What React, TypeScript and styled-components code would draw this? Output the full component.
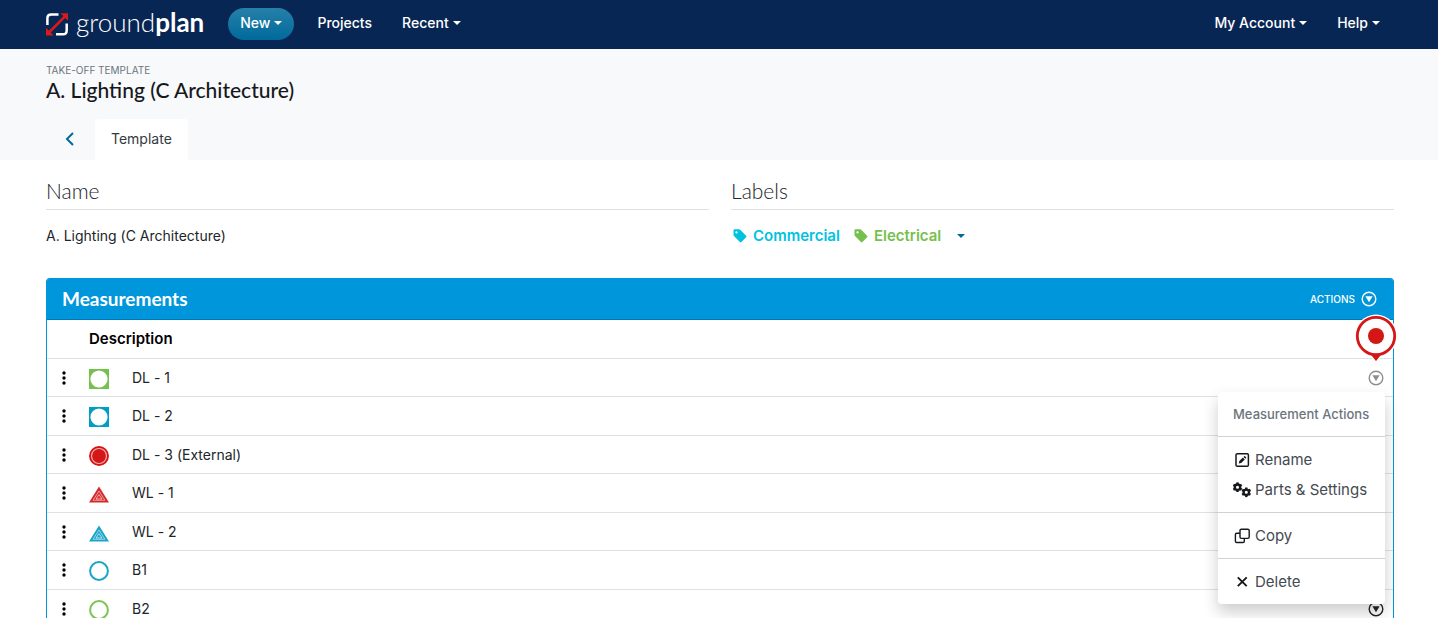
import React from "react";
import styled, { createGlobalStyle, css } from "styled-components";

const body = `Inter, "Liberation Sans", sans-serif`;
const heading = `Lato, "Liberation Sans", sans-serif`;

const GlobalStyle = createGlobalStyle`
  *, *::before, *::after { box-sizing: border-box; }
  body { margin: 0; background: #fff; color: #212529; font: 400 14px/20px ${body}; font-variant-ligatures: none; }
  button { font: inherit; color: inherit; background: none; border: 0; padding: 0; cursor: pointer; }
  a { color: inherit; text-decoration: none; }
  h1, h2, h3, p, ul { margin: 0; padding: 0; font-weight: 400; }
`;

const Page = styled.div`
  height: 100vh;
  margin-right: 2px;
  overflow: hidden;
`;

const Navbar = styled.header`
  display: flex;
  align-items: center;
  height: 49px;
  padding: 0 58px 2px 46px;
  background: #082654;
  color: #fff;
  font-weight: 500;
`;

const Logo = styled.a`
  display: flex;
  align-items: center;
  gap: 7px;
  font: 300 26px/32px ${heading};
  b { font-weight: 700; }
  svg { display: block; margin-top: 2px; }
`;

const LogoText = styled.span`
  padding-bottom: 4px;
`;

const NavLinks = styled.nav`
  display: flex;
  align-items: center;
  gap: 30px;
  margin-left: 24px;
  flex: 1;
`;

const NavItem = styled.button<{ $pill?: boolean }>`
  display: flex;
  align-items: center;
  gap: 4px;
  padding-bottom: 2px;
  ${(p) => p.$pill && css`
    height: 32px;
    padding: 0 12px 2px;
    margin-right: -7px;
    border-radius: 16px;
    background: linear-gradient(#2680a9, #006a9c);
  `}
`;

const Spacer = styled.span`flex: 1;`;

const Caret = styled.span`
  width: 0;
  height: 0;
  border: 4px solid transparent;
  border-top-color: currentColor;
  border-bottom: 0;
`;

const PageHeader = styled.section`
  height: 111px;
  padding: 13px 46px 0;
  background: #f8f9fb;
`;

const Eyebrow = styled.p`
  color: #6c757d;
  font: 400 10px/16px ${body};
  text-transform: uppercase;
`;

const Title = styled.h1`
  color: #16181b;
  font: 500 21px/24px ${heading};
`;

const Tabs = styled.nav`
  display: flex;
  margin-top: 17px;
`;

const Back = styled.button`
  display: grid;
  place-items: center;
  width: 49px;
  height: 40px;
  padding-right: 2px;
  color: #006a9c;
`;

const Tab = styled.a`
  padding: 10px 16px 11px;
  border-radius: 4px 4px 0 0;
  background: #fff;
  color: #343a40;
`;

const Main = styled.main`
  padding: 18px 44px 0 46px;
`;

const Columns = styled.div`
  display: grid;
  grid-template-columns: 1fr 1fr;
  gap: 22px;
`;

const FieldTitle = styled.h2`
  padding-bottom: 6px;
  border-bottom: 1px solid #dee2e6;
  font: 300 21px/25px ${heading};
`;

const FieldBody = styled.div`
  display: flex;
  align-items: center;
  margin-top: 16px;
  height: 20px;
`;

const Label = styled.span<{ $color: string }>`
  display: flex;
  align-items: center;
  gap: 6px;
  margin: 0 12px 0 2px;
  color: ${(p) => p.$color};
  font-size: 15px;
  font-weight: 600;
`;

const LabelMenu = styled.button`
  padding: 8px 4px;
  color: #006a9c;
`;

const Panel = styled.section`
  position: relative;
  margin-top: 32px;
  border: 1px solid #0096dc;
  border-top: 0;
  border-radius: 4px 4px 0 0;
`;

const PanelHead = styled.div`
  display: flex;
  align-items: center;
  justify-content: space-between;
  height: 42px;
  padding: 0 16px 0 15px;
  border-bottom: 1px solid #0079b8;
  border-radius: 3px 3px 0 0;
  background: #0096dc;
  color: #fff;
`;

const PanelTitle = styled.h2`
  font: 700 19px/24px ${heading};
`;

const Actions = styled.button`
  display: flex;
  align-items: center;
  gap: 6px;
  font: 500 10px/16px ${body};
  text-transform: uppercase;
`;

const Table = styled.table`
  width: 100%;
  border-collapse: separate;
  border-spacing: 0;
  table-layout: fixed;
  th, td { padding: 0; border-bottom: 1px solid #dee2e6; text-align: left; }
  thead th { height: 39px; color: #000; font-size: 15px; font-weight: 600; }
  td { height: 38px; }
  tbody tr:nth-child(even) td { height: 39px; }
  svg { display: block; }
`;

const Col = styled.col<{ $w?: number }>`
  width: ${(p) => (p.$w ? p.$w + "px" : "auto")};
`;

const Symbol = styled.span`
  display: block;
  padding-top: 2px;
`;

const RowButton = styled.button<{ $muted?: boolean }>`
  display: block;
  color: ${(p) => (p.$muted ? "#8f8f8f" : "#212529")};
`;

const Handle = styled.button`
  display: block;
  margin-left: 14px;
  color: #000;
`;

const Pin = styled.svg`
  position: absolute;
  top: 34px;
  right: -5px;
  z-index: 3;
`;

const Menu = styled.div`
  position: absolute;
  top: 114px;
  right: 8px;
  z-index: 2;
  min-width: 167px;
  border-radius: 4px;
  background: #fff;
  box-shadow: 0 8px 16px rgba(0, 0, 0, 0.2);
`;

const MenuTitle = styled.h3`
  padding: 12px 15px;
  color: #6c757d;
  font: 500 13px/20px ${body};
`;

const MenuGroup = styled.div`
  padding: 8px 0 7px;
  border-top: 1px solid #d0d3d6;
`;

const MenuItem = styled.button`
  display: flex;
  align-items: center;
  width: 100%;
  height: 30px;
  gap: 4px;
  padding: 0 15px;
  color: #444a50;
  font-size: 15px;
  white-space: nowrap;
  svg { color: #16181b; }
`;

const ArrowCircle = () => (
  <svg width="16" height="16" viewBox="0 0 16 16" aria-hidden="true">
    <circle cx="8" cy="8" r="6.8" fill="none" stroke="currentColor" strokeWidth="1.4" />
    <path d="M4.4 5.2h7.2L8 11.300z" fill="currentColor" />
  </svg>
);

const Dots = () => (
  <svg width="6" height="14" viewBox="0 0 6 14" aria-hidden="true">
    {[2, 7, 12].map((y) => <circle key={y} cx="3" cy={y} r="1.7" fill="currentColor" />)}
  </svg>
);

const TagIcon = () => (
  <svg width="14" height="14" viewBox="0 0 14 14" aria-hidden="true">
    <path fillRule="evenodd" fill="currentColor" d="M1.5 .3H6q.7 0 1.2.5l5.900 5.900q.8.8 0 1.600l-4.600 4.600q-.8.8-1.600 0L1 7Q.5 6.500 .5 5.800V1.300Q.5.3 1.500.3zM3.500 2.300a1.100 1.100 0 1 0 .01 2.200 1.100 1.100 0 0 0 0-2.200z" />
  </svg>
);

type Shape = "square" | "target" | "triangle" | "ring";

const ShapeIcon = ({ shape, color }: { shape: Shape; color: string }) => (
  <svg width="20" height="20" viewBox="0 0 20 20" aria-hidden="true">
    {shape === "square" && (
      <>
        <rect width="20" height="20" fill={color} />
        <circle cx="10" cy="10" r="8.600" fill="#fff" />
      </>
    )}
    {shape === "target" && (
      <>
        <circle cx="10" cy="10" r="9" fill="#f3b4b4" stroke={color} strokeWidth="1.900" />
        <circle cx="10" cy="10" r="6.900" fill={color} />
      </>
    )}
    {shape === "triangle" && (
      <>
        <path d="M10 2.500L20 18.500H0z" fill={color} />
        <path d="M10 7L15.900 16.300H4.100z" fill="none" stroke="#fff" strokeOpacity=".75" strokeWidth=".7" />
        <path d="M10 10.600L13 15H7z" fill="none" stroke="#fff" strokeOpacity=".9" strokeWidth=".7" />
      </>
    )}
    {shape === "ring" && <circle cx="10" cy="10" r="8.900" fill="#fff" stroke={color} strokeWidth="2" />}
  </svg>
);

const RenameIcon = () => (
  <svg width="18" height="16" viewBox="0 0 18 16" aria-hidden="true">
    <rect x="3" y="1.800" width="12.400" height="12.400" rx="1.300" fill="none" stroke="currentColor" strokeWidth="1.500" />
    <path d="M5.800 11.500l.5-2.400 3.600-3.600 1.900 1.900-3.600 3.600zM10.500 4.900l.7-.7q.4-.3.800 0l1.100 1.100q.3.400 0 .8l-.7.700z" fill="currentColor" />
  </svg>
);

const Gear = ({ x, y }: { x: number; y: number }) => (
  <g transform={`translate(${x} ${y})`}>
    <circle r="2.700" fill="none" stroke="currentColor" strokeWidth="2.300" />
    {[0, 60, 120, 180, 240, 300].map((a) => (
      <rect key={a} x="-1.200" y="-4.800" width="2.400" height="2" fill="currentColor" transform={`rotate(${a})`} />
    ))}
  </g>
);

const GearsIcon = () => (
  <svg width="18" height="16" viewBox="0 0 18 16" aria-hidden="true">
    <Gear x={4.500} y={5.200} />
    <Gear x={13.300} y={10.300} />
  </svg>
);

const CopyIcon = () => (
  <svg width="18" height="16" viewBox="0 0 18 16" fill="none" stroke="currentColor" strokeWidth="1.400" aria-hidden="true">
    <rect x="7" y="1.200" width="9.200" height="9.200" rx="1.300" />
    <path d="M7 5.200H3.700Q2.400 5.200 2.400 6.500V13.200Q2.400 14.500 3.700 14.500H10Q11.300 14.500 11.300 13.200V10.400" />
  </svg>
);

const CloseIcon = () => (
  <svg width="18" height="16" viewBox="0 0 18 16" fill="none" stroke="currentColor" strokeWidth="1.900" aria-hidden="true">
    <path d="M4.800 3.300L13.700 12.200M13.700 3.300L4.800 12.200" />
  </svg>
);

const rows: { name: string; shape: Shape; color: string }[] = [
  { name: "DL - 1", shape: "square", color: "#76c04e" },
  { name: "DL - 2", shape: "square", color: "#009dc4" },
  { name: "DL - 3 (External)", shape: "target", color: "#d41616" },
  { name: "WL - 1", shape: "triangle", color: "#d62a2a" },
  { name: "WL - 2", shape: "triangle", color: "#1aa5c8" },
  { name: "B1", shape: "ring", color: "#1aa5c8" },
  { name: "B2", shape: "ring", color: "#7cc456" },
];

export default function App() {
  return (
    <Page>
      <GlobalStyle />
      <Navbar>
        <Logo href="#">
          <svg width="23" height="23" viewBox="0 0 23 23" aria-hidden="true">
            <path d="M1.400 12V5.200Q1.400 1.400 5.200 1.400H12.500" fill="none" stroke="#fff" strokeWidth="2.500" />
            <path d="M20.700 10.500V17.400Q20.700 21.200 16.900 21.200H10" fill="none" stroke="#fff" strokeWidth="2.500" />
            <path d="M3 19.500L19 3.300" stroke="#d91a1a" strokeWidth="2.600" />
            <path d="M14.500.3H22V7.800zM0 14.800V22.500H7.600z" fill="#d91a1a" />
          </svg>
          <LogoText>ground<b>plan</b></LogoText>
        </Logo>
        <NavLinks>
          <NavItem $pill>New <Caret /></NavItem>
          <NavItem as="a" href="#">Projects</NavItem>
          <NavItem>Recent <Caret /></NavItem>
          <Spacer />
          <NavItem>My Account <Caret /></NavItem>
          <NavItem>Help <Caret /></NavItem>
        </NavLinks>
      </Navbar>

      <PageHeader>
        <Eyebrow>Take-off template</Eyebrow>
        <Title>A. Lighting (C Architecture)</Title>
        <Tabs>
          <Back aria-label="Back">
            <svg width="10" height="14" viewBox="0 0 10 14" fill="none" stroke="currentColor" strokeWidth="2" aria-hidden="true">
              <path d="M8 1L2 7L8 13" />
            </svg>
          </Back>
          <Tab href="#">Template</Tab>
        </Tabs>
      </PageHeader>

      <Main>
        <Columns>
          <section>
            <FieldTitle>Name</FieldTitle>
            <FieldBody>A. Lighting (C Architecture)</FieldBody>
          </section>
          <section>
            <FieldTitle>Labels</FieldTitle>
            <FieldBody>
              <Label $color="#00c3e0"><TagIcon />Commercial</Label>
              <Label $color="#76c04e"><TagIcon />Electrical</Label>
              <LabelMenu aria-label="Edit labels"><Caret as="div" /></LabelMenu>
            </FieldBody>
          </section>
        </Columns>

        <Panel>
          <PanelHead>
            <PanelTitle>Measurements</PanelTitle>
            <Actions>Actions <ArrowCircle /></Actions>
          </PanelHead>
          <Table>
            <colgroup>
              <Col $w={42} />
              <Col $w={43} />
              <Col />
              <Col $w={25} />
            </colgroup>
            <thead>
              <tr>
                <th />
                <th colSpan={3}>Description</th>
              </tr>
            </thead>
            <tbody>
              {rows.map((r, i) => (
                <tr key={r.name}>
                  <td><Handle aria-label="Reorder"><Dots /></Handle></td>
                  <td><Symbol><ShapeIcon shape={r.shape} color={r.color} /></Symbol></td>
                  <td>{r.name}</td>
                  <td><RowButton $muted={i === 0} aria-label="Measurement actions"><ArrowCircle /></RowButton></td>
                </tr>
              ))}
            </tbody>
          </Table>

          <Pin width="44" height="52" viewBox="0 0 44 52" aria-hidden="true">
            <path d="M22 50L14 40H30z" fill="#d41616" stroke="#fff" strokeWidth="2" />
            <circle cx="22" cy="24" r="21.500" fill="#fff" />
            <path d="M22 49L16 41.500H28z" fill="#d41616" />
            <circle cx="22" cy="24" r="18.700" fill="#fff" stroke="#d41616" strokeWidth="2.800" />
            <circle cx="22" cy="24" r="8" fill="#d41616" />
          </Pin>

          <Menu>
            <MenuTitle>Measurement Actions</MenuTitle>
            <MenuGroup>
              <MenuItem><RenameIcon />Rename</MenuItem>
              <MenuItem><GearsIcon />Parts &amp; Settings</MenuItem>
            </MenuGroup>
            <MenuGroup><MenuItem><CopyIcon />Copy</MenuItem></MenuGroup>
            <MenuGroup><MenuItem><CloseIcon />Delete</MenuItem></MenuGroup>
          </Menu>
        </Panel>
      </Main>
    </Page>
  );
}
